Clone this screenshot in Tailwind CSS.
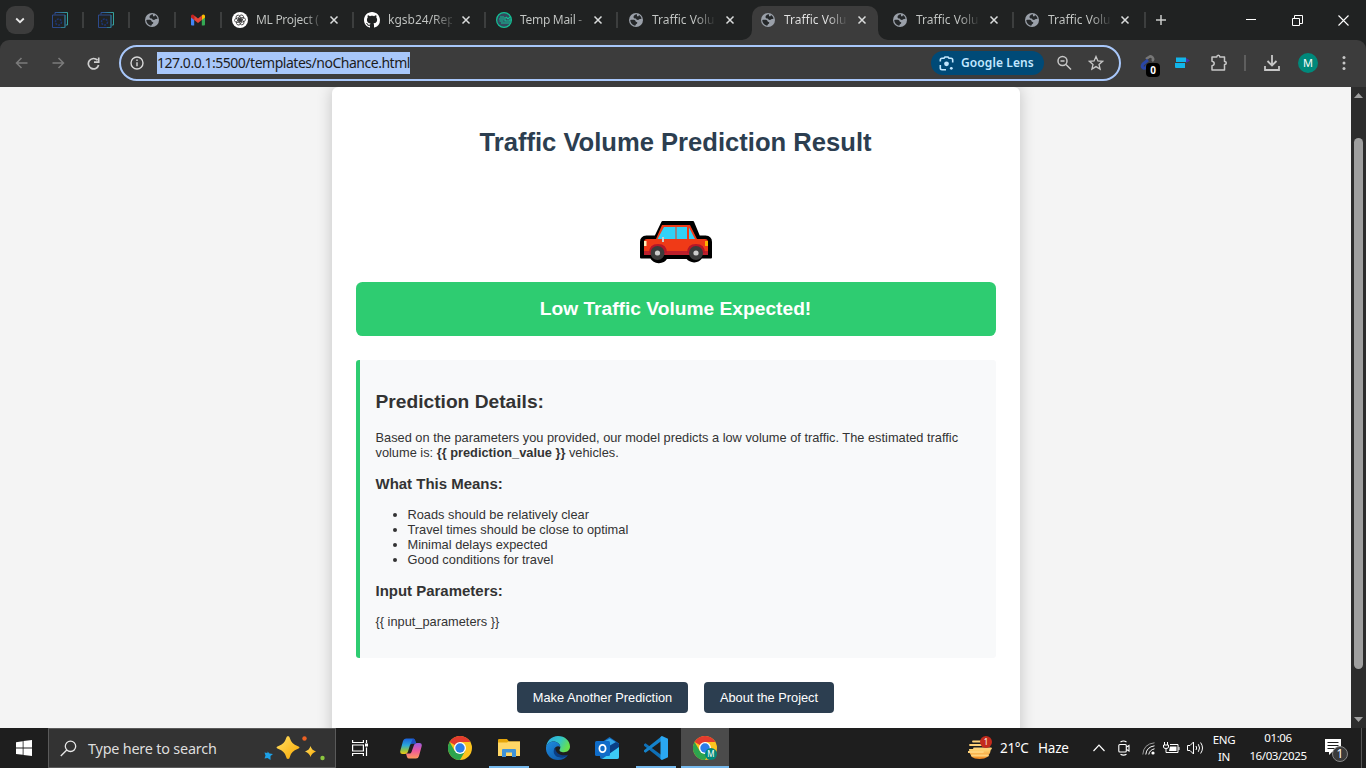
<!DOCTYPE html>
<html lang="en">
<head>
<meta charset="utf-8">
<title>Traffic Volume Prediction Result</title>
<script src="https://cdn.jsdelivr.net/npm/@tailwindcss/browser@4"></script>
</head>
<body class="w-[1366px] h-[768px] overflow-hidden bg-[#202222] font-['Noto_Sans',sans-serif]">
<svg width="0" height="0" class="absolute">
  <defs>
    <linearGradient id="edge" x1="0" y1="0" x2="1" y2="0"><stop offset="0" stop-color="#2c4a97"/><stop offset="1" stop-color="#35a39c"/></linearGradient>
    <linearGradient id="gold" x1="0" y1="0" x2="1" y2="1"><stop offset="0" stop-color="#ffe066"/><stop offset="1" stop-color="#f9a800"/></linearGradient>
    <linearGradient id="cpA" x1="0" y1="0" x2="0" y2="1"><stop offset="0" stop-color="#1b62dd"/><stop offset=".45" stop-color="#2ba8d8"/><stop offset=".75" stop-color="#8bc34a"/><stop offset="1" stop-color="#f2c811"/></linearGradient>
    <linearGradient id="cpB" x1="0" y1="0" x2="0" y2="1"><stop offset="0" stop-color="#9a5be0"/><stop offset=".5" stop-color="#ee5a9a"/><stop offset="1" stop-color="#ff9a5a"/></linearGradient>
    <linearGradient id="edTop" x1="0" y1="0" x2="1" y2=".4"><stop offset="0" stop-color="#2aa5e8"/><stop offset=".6" stop-color="#33c6c6"/><stop offset="1" stop-color="#66e04f"/></linearGradient>
    <linearGradient id="edBot" x1="0" y1="0" x2="1" y2="1"><stop offset="0" stop-color="#1e8de0"/><stop offset="1" stop-color="#0d4f9e"/></linearGradient>
    <linearGradient id="haze" x1="0" y1="0" x2="0" y2="1"><stop offset="0" stop-color="#ffd978"/><stop offset="1" stop-color="#f0861c"/></linearGradient>
    <symbol id="globe" viewBox="0 0 14 14"><circle cx="7" cy="7" r="7" fill="#9aa0a9"/><path d="M8 1.300C5.800 1.500 4.500 2.800 4.500 4.100c0 1.200 1 1.500 2.300 1.500.3 1 1.300 1.500 2.400 1.300 1-.2 1.300-.8 2.300-.8.5 0 .8-.2 1.100-.5C12.300 4 11.300 2.800 10 2l-.5 1.300H8zM1.300 7c1.400-.3 3.700-.5 4.700.3.700.6.400 1.400 1.500 1.700 1 .3 1 1.100.300 1.700-.6.500-1.300.6-1.500 2C3.500 12.300 1.300 10 1.300 7z" fill="#25282a"/></symbol>
    <symbol id="layers" viewBox="0 0 18 18" fill="none"><path d="M4 3.500V1.500h12.500v12.500H14.500" stroke="url(#edge)"/><path d="M1.500 4h12.500v12.500h-12.500z" stroke="#2c4a8c"/><path d="M14 4v12.500h-4" stroke="#2e7d8c"/><circle cx="7.500" cy="11" r="3" stroke="#1c3570" stroke-width="1.500" stroke-dasharray="2 1"/></symbol>
    <symbol id="close" viewBox="0 0 10 10"><path d="M1.500 1.500l7 7m0-7l-7 7" stroke="#dadcdc" stroke-width="1.500" fill="none"/></symbol>
    <symbol id="chrome" viewBox="0 0 24 24"><circle cx="12" cy="12" r="12" fill="#fcc31e"/><path d="M12 12L1.600 6A12 12 0 0 1 22.400 6H12z" fill="#e33b2e"/><path d="M1.600 6A12 12 0 0 0 12 24l5.200-9L12 12 6.800 15z" fill="#2da44e"/><circle cx="12" cy="12" r="6" fill="#fff"/><circle cx="12" cy="12" r="4.700" fill="#2b7de9"/></symbol>
  </defs>
</svg>

<!-- Tab strip -->
<header class="flex h-10 w-full items-center text-[12px] text-[#c4c7c5]">
  <div class="ml-1.5 flex h-7 w-7 shrink-0 items-center justify-center rounded-[9px] bg-[#3c3c3c]"><svg width="10" height="7" viewBox="0 0 10 7"><path d="M1.200 1.500L5 5.200l3.800-3.700" fill="none" stroke="#e8e8e8" stroke-width="1.800"/></svg></div>
  <div class="w-[3px] shrink-0"></div>
  <div class="flex w-[46px] shrink-0 items-center"><svg class="ml-3.5" width="18" height="18"><use href="#layers"/></svg><i class="-mr-px ml-auto h-4 w-0.5 bg-[#3c3e3e]"></i></div>
  <div class="flex w-[46px] shrink-0 items-center"><svg class="ml-3.5" width="18" height="18"><use href="#layers"/></svg><i class="-mr-px ml-auto h-4 w-0.5 bg-[#3c3e3e]"></i></div>
  <div class="flex w-[46px] shrink-0 items-center"><svg class="ml-4" width="14" height="14"><use href="#globe"/></svg><i class="-mr-px ml-auto h-4 w-0.5 bg-[#3c3e3e]"></i></div>
  <div class="flex w-[46px] shrink-0 items-center"><svg class="ml-4" width="14" height="12" viewBox="0 0 14 12"><path d="M0 2v8.500q0 1 1 1h2.200V5z" fill="#4285f4"/><path d="M14 2v8.500q0 1-1 1h-2.200V5z" fill="#34a853"/><path d="M10.800 1.500V6L14 3.500V2q0-1.500-1.500-1.500-1 0-1.700 1z" fill="#fbbc04"/><path d="M3.200 1.500V6L0 3.500V2Q0 .5 1.500.5q1 0 1.700 1z" fill="#c5221f"/><path d="M3.200 1.500L7 4.500l3.800-3V6L7 9 3.200 6z" fill="#ea4335"/></svg><i class="-mr-px ml-auto h-4 w-0.5 bg-[#3c3e3e]"></i></div>

  <div class="flex w-[132px] shrink-0 items-center">
    <svg class="ml-[11px] shrink-0" width="16" height="16" viewBox="0 0 16 16"><circle cx="8" cy="8" r="8" fill="#fff"/><g fill="none" stroke="#333" stroke-width=".8"><ellipse cx="8" cy="5.700" rx="2.200" ry="3.200" transform="rotate(25 8 8)"/><ellipse cx="8" cy="5.700" rx="2.200" ry="3.200" transform="rotate(85 8 8)"/><ellipse cx="8" cy="5.700" rx="2.200" ry="3.200" transform="rotate(145 8 8)"/><ellipse cx="8" cy="5.700" rx="2.200" ry="3.200" transform="rotate(205 8 8)"/><ellipse cx="8" cy="5.700" rx="2.200" ry="3.200" transform="rotate(265 8 8)"/><ellipse cx="8" cy="5.700" rx="2.200" ry="3.200" transform="rotate(325 8 8)"/></g></svg>
    <span class="ml-2 w-[64px] whitespace-nowrap bg-linear-to-r from-[#c4c7c5] from-75% to-[#c4c7c5]/20 bg-clip-text tracking-[-0.3px] text-transparent">ML Project (</span>
    <svg class="ml-[9px]" width="10" height="10"><use href="#close"/></svg><i class="-mr-px ml-auto h-4 w-0.5 bg-[#3c3e3e]"></i>
  </div>
  <div class="flex w-[132px] shrink-0 items-center">
    <svg class="ml-[11px] shrink-0" width="16" height="16" viewBox="0 0 16 16"><path fill="#fff" d="M8 0C3.580 0 0 3.580 0 8c0 3.540 2.290 6.530 5.470 7.590.4.070.55-.17.55-.38 0-.19-.01-.82-.01-1.490-2.010.37-2.530-.49-2.690-.94-.09-.23-.48-.94-.82-1.130-.28-.15-.68-.52-.01-.53.63-.01 1.080.58 1.230.82.72 1.210 1.870.87 2.330.66.070-.52.280-.87.510-1.070-1.780-.2-3.640-.89-3.640-3.950 0-.87.310-1.590.820-2.150-.08-.2-.36-1.020.080-2.120 0 0 .67-.21 2.200.820.64-.18 1.320-.27 2-.27s1.360.090 2 .27c1.530-1.040 2.200-.82 2.200-.82.44 1.100.16 1.920.080 2.120.51.56.82 1.270.82 2.150 0 3.070-1.870 3.750-3.650 3.950.29.25.54.73.54 1.480 0 1.070-.01 1.930-.01 2.200 0 .21.15.46.55.38A8 8 0 0 0 16 8c0-4.420-3.580-8-8-8z"/></svg>
    <span class="ml-2 w-[64px] whitespace-nowrap bg-linear-to-r from-[#c4c7c5] from-70% to-[#c4c7c5]/20 bg-clip-text text-transparent">kgsb24/Rep</span>
    <svg class="ml-[9px]" width="10" height="10"><use href="#close"/></svg><i class="-mr-px ml-auto h-4 w-0.5 bg-[#3c3e3e]"></i>
  </div>
  <div class="flex w-[132px] shrink-0 items-center">
    <svg class="ml-[11px] shrink-0" width="16" height="16" viewBox="0 0 16 16" fill="none"><circle cx="8" cy="8" r="7.400" fill="#34495e" stroke="#13c296" stroke-width="1.200"/><path d="M4 5h4M3 7h5M3.500 9h4M5 11h9M9 5v4h5V7M10 5l2 2 2-2" stroke="#13c296" stroke-width="1.100"/></svg>
    <span class="ml-2 w-[64px] whitespace-nowrap bg-linear-to-r from-[#c4c7c5] from-85% to-[#c4c7c5]/30 bg-clip-text tracking-[-0.3px] text-transparent">Temp Mail -</span>
    <svg class="ml-[9px]" width="10" height="10"><use href="#close"/></svg><i class="-mr-px ml-auto h-4 w-0.5 bg-[#3c3e3e]"></i>
  </div>
  <div class="flex w-[132px] shrink-0 items-center">
    <svg class="ml-3 shrink-0" width="14" height="14"><use href="#globe"/></svg>
    <span class="ml-[9px] w-[62px] whitespace-nowrap bg-linear-to-r from-[#c4c7c5] from-70% to-[#c4c7c5]/10 bg-clip-text text-transparent">Traffic Volu</span>
    <svg class="ml-[11px]" width="10" height="10"><use href="#close"/></svg>
  </div>
  <div class="relative ml-[3px] mr-[3px] mt-1.5 flex h-[34px] w-[126px] shrink-0 items-center rounded-t-[10px] bg-[#3c3c3c] pb-1.5">
    <svg class="absolute -left-2.5 bottom-0" width="10" height="10"><path d="M10 0v10H0A10 10 0 0 0 10 0z" fill="#3c3c3c"/></svg>
    <svg class="absolute -right-2.5 bottom-0" width="10" height="10"><path d="M0 0v10h10A10 10 0 0 1 0 0z" fill="#3c3c3c"/></svg>
    <svg class="ml-[9px] shrink-0" width="14" height="14"><use href="#globe"/></svg>
    <span class="ml-[9px] w-[62px] whitespace-nowrap bg-linear-to-r from-[#e3e3e3] from-70% to-[#e3e3e3]/10 bg-clip-text text-transparent">Traffic Volu</span>
    <svg class="ml-[11px]" width="10" height="10"><use href="#close"/></svg>
  </div>
  <div class="flex w-[132px] shrink-0 items-center">
    <svg class="ml-3 shrink-0" width="14" height="14"><use href="#globe"/></svg>
    <span class="ml-[9px] w-[62px] whitespace-nowrap bg-linear-to-r from-[#c4c7c5] from-70% to-[#c4c7c5]/10 bg-clip-text text-transparent">Traffic Volu</span>
    <svg class="ml-[11px]" width="10" height="10"><use href="#close"/></svg><i class="-mr-px ml-auto h-4 w-0.5 bg-[#3c3e3e]"></i>
  </div>
  <div class="flex w-[132px] shrink-0 items-center">
    <svg class="ml-3 shrink-0" width="14" height="14"><use href="#globe"/></svg>
    <span class="ml-[9px] w-[62px] whitespace-nowrap bg-linear-to-r from-[#c4c7c5] from-70% to-[#c4c7c5]/10 bg-clip-text text-transparent">Traffic Volu</span>
    <svg class="ml-[10px]" width="10" height="10"><use href="#close"/></svg><i class="-mr-px ml-auto h-4 w-0.5 bg-[#3c3e3e]"></i>
  </div>
  <svg class="ml-2.5 shrink-0" width="12" height="12"><path d="M6 1v10M1 6h10" stroke="#c9cbca" stroke-width="1.500"/></svg>
  <svg class="ml-auto shrink-0" width="10" height="10"><path d="M0 4.500h10" stroke="#fff"/></svg>
  <svg class="ml-9 shrink-0" width="11" height="11" fill="none" stroke="#fff"><path d="M.5 3.500h7v7h-7zM2.500 3V.5h8v8H8"/></svg>
  <svg class="ml-[35px] mr-[17px] shrink-0" width="11" height="11" stroke="#fff" stroke-width="1.100"><path d="M.5.500l10 10m0-10l-10 10"/></svg>
</header>

<!-- Toolbar -->
<nav class="flex h-[47px] w-full items-center rounded-t-[9px] bg-[#3c3c3c] pb-px">
  <svg class="ml-[15px] shrink-0" width="13" height="12" fill="none" stroke="#7b7b7b" stroke-width="1.500"><path d="M12.500 6H1.500M6.500 1l-5 5 5 5"/></svg>
  <svg class="ml-6 shrink-0" width="13" height="12" fill="none" stroke="#7b7b7b" stroke-width="1.500"><path d="M.5 6h11M6.500 1l5 5-5 5"/></svg>
  <svg class="ml-[22px] shrink-0" width="13" height="13" fill="none" stroke="#d0d0d0" stroke-width="1.700"><path d="M10.500 3.300A5.200 5.200 0 1 0 11.600 8M11.700.5v4.700H7"/></svg>
  <div class="ml-[19px] flex h-9 w-[1002px] shrink-0 items-center rounded-full border-2 border-[#a8c7fa]">
    <svg class="ml-[9px] shrink-0" width="14" height="14" fill="none" stroke="#d8d8d8" stroke-width="1.400"><circle cx="7" cy="7" r="6"/><path d="M7 6.200v4M7 3.500v1.500"/></svg>
    <span class="ml-[13px] h-[22px] w-[253px] whitespace-nowrap bg-[#a8c7fa] text-[14px] leading-[22px] tracking-[-0.48px] text-[#1c1c1c]">127.0.0.1:5500/templates/noChance.html</span>
    <div class="ml-auto flex h-6 w-[113px] items-center rounded-full bg-[#004a77] text-[12px] font-semibold text-[#c2e7ff]">
      <svg class="ml-2 shrink-0" width="15" height="15" fill="none" stroke="#c2e7ff" stroke-width="1.600"><path d="M1.300 5.500V4q0-1.700 1.700-1.700h2L6 1h3l1 1.300h2q1.700 0 1.700 1.700v2.500M1.300 9v3q0 1.700 1.700 1.700h4"/><circle cx="7.500" cy="7.800" r="2.400" fill="#c2e7ff" stroke="none"/><circle cx="12.300" cy="12.300" r="1.400" fill="#c2e7ff" stroke="none"/></svg>
      <span class="ml-[7px] whitespace-nowrap tracking-[0.1px]">Google Lens</span>
    </div>
    <svg class="ml-3 shrink-0" width="16" height="16" fill="none" stroke="#c7c7c7" stroke-width="1.500"><circle cx="6.500" cy="6" r="4.500"/><path d="M10 9.500l5 5M4.500 6h4"/></svg>
    <svg class="ml-4 mr-[15px] shrink-0" width="16" height="16" viewBox="0 0 16 16" fill="none" stroke="#c7c7c7" stroke-width="1.300"><path d="M8 1.500l1.900 4.400 4.700.4-3.600 3.100 1.100 4.700L8 11.600l-4.100 2.500L5 9.400 1.400 6.300l4.700-.4z"/></svg>
  </div>
  <div class="relative ml-[17px] h-5 w-[22px] shrink-0">
    <svg width="22" height="20" fill="none"><path d="M8 6l3-2q2-1.500 3.500.5T14 8" stroke="#777" stroke-width="2.600"/><path d="M10 7l-5 4q-2 3 .5 4T9 12" stroke="#2946a8" stroke-width="3"/></svg>
    <span class="absolute left-[8px] top-[10px] flex h-[14px] w-[14px] items-center justify-center rounded-[4px] bg-black text-[10px] font-bold text-white">0</span>
  </div>
  <svg class="ml-[15px] shrink-0" width="16" height="12"><path d="M1 .5h10V5H1zM0 6h10v5H1q-1 0-1-1z" fill="#12b5ea"/><path d="M11 1l4 2.500L11 6z" fill="#4433a8"/></svg>
  <svg class="ml-[19px] shrink-0" width="18" height="18" viewBox="0 0 18 18" fill="none" stroke="#c7c7c7" stroke-width="1.500"><path d="M2 3h4.800q0-1.800 1.500-1.800T9.800 3h4.700v4.500q1.800 0 1.800 1.500t-1.800 1.500V16H2v-4.300q2.200-.4 2.200-2.200T2 7.300z" stroke-linejoin="round"/></svg>
  <i class="ml-4 h-4 w-0.5 bg-[#5e5e5e]"></i>
  <svg class="ml-[17px] shrink-0" width="18" height="18" fill="none" stroke="#c7c7c7" stroke-width="1.800"><path d="M9 1v10M4.500 7L9 11.500 13.500 7M2 12v4h14v-4"/></svg>
  <div class="ml-[17px] flex h-5 w-5 shrink-0 items-center justify-center rounded-full bg-[#00897b] text-[11px] text-white">M</div>
  <svg class="ml-6 shrink-0" width="4" height="16" fill="#c7c7c7"><circle cx="2" cy="2.500" r="1.500"/><circle cx="2" cy="8" r="1.500"/><circle cx="2" cy="13.500" r="1.500"/></svg>
</nav>

<!-- Page viewport -->
<div class="flex h-[641px] w-full overflow-hidden bg-[#f4f4f4] font-['Liberation_Sans',Arial,sans-serif] text-[12.8px] leading-[15px] text-[#333]">
  <main class="flex w-[1351px] justify-center overflow-hidden">
    <div class="h-[680px] w-[688px] rounded-[6.4px] bg-white px-6 shadow-[0_0_16px_rgba(0,0,0,0.2)]">
      <h1 class="pt-[40px] text-center text-[25.6px] font-bold leading-[30px] text-[#2c3e50]">Traffic Volume Prediction Result</h1>
      <div class="mt-[63px] flex h-[48px] justify-center">
        <svg width="74" height="46" viewBox="0 0 74 46">
          <path d="M23.500 2H54L60 16.500h6.500Q72 17 72 22v15.500H62.500A9 9 0 0 1 48 38H27.500A9 9 0 0 1 12 37.500H2V22q0-5 5.500-5.500h9z" fill="#000" stroke="#000" stroke-width="2" stroke-linejoin="round"/>
          <path d="M23 5h28l7 14h8q3 0 3 3v12H5V22q0-3 3-3h9z" fill="#f03a17"/>
          <path d="M25 7h11.500v12H18.500zM37.500 7H48v12H37.500zM50 7.500l6 11.500h-6z" fill="#31d2f7"/>
          <path d="M5 31h64v4H5z" fill="#bd1f2b"/>
          <path d="M10 33q0-9 9-9t9 9zM48 33q0-9 9-9t9 9z" fill="#b51728"/>
          <path d="M5 21h2.500v5H5z" fill="#fff1b5"/><path d="M66 21h3v5h-3z" fill="#ffb300"/><path d="M23 17h2v5h-2z" fill="#ccc"/>
          <circle cx="18.500" cy="33" r="7" fill="#3b3b3b"/><circle cx="57" cy="33" r="7" fill="#3b3b3b"/>
          <circle cx="18.500" cy="33" r="2.600" fill="#ccc"/><circle cx="57" cy="33" r="2.600" fill="#ccc"/>
        </svg>
      </div>
      <div class="mt-[14px] h-[54px] rounded-[6.4px] bg-[#2ecc71] text-center text-[19.2px] font-bold leading-[53px] text-white">Low Traffic Volume Expected!</div>
      <section class="mt-6 h-[298px] rounded-[3.2px] border-l-4 border-[#2ecc71] bg-[#f8f9fa] px-4 pt-[31px]">
        <h2 class="text-[19.2px] font-bold leading-[22px]">Prediction Details:</h2>
        <p class="mt-[17px]">Based on the parameters you provided, our model predicts a low volume of traffic. The estimated traffic<br>volume is: <b>{{ prediction_value }}</b> vehicles.</p>
        <h3 class="mt-[15px] text-[14.97px] font-bold leading-[17px]">What This Means:</h3>
        <ul class="mt-[15px] list-disc pl-8"><li>Roads should be relatively clear</li><li>Travel times should be close to optimal</li><li>Minimal delays expected</li><li>Good conditions for travel</li></ul>
        <h3 class="mt-[15px] text-[14.97px] font-bold leading-[17px]">Input Parameters:</h3>
        <p class="mt-[15px]">{{ input_parameters }}</p>
      </section>
      <div class="mt-6 flex justify-center gap-4 text-white">
        <a class="flex h-[31px] w-[171px] items-center justify-center rounded-[4px] bg-[#2c3e50]">Make Another Prediction</a>
        <a class="flex h-[31px] w-[130px] items-center justify-center rounded-[4px] bg-[#2c3e50]">About the Project</a>
      </div>
    </div>
  </main>
  <aside class="flex w-[15px] flex-col items-center bg-[#2c2c2c]">
    <svg class="mt-1.5 shrink-0" width="9" height="5"><path d="M0 5h9L4.500 0z" fill="#9f9f9f"/></svg>
    <div class="mt-10 h-[531px] w-[9px] shrink-0 rounded-full bg-[#9f9f9f]"></div>
    <svg class="mb-1.5 mt-auto shrink-0" width="9" height="5"><path d="M0 0h9L4.500 5z" fill="#9f9f9f"/></svg>
  </aside>
</div>

<!-- Taskbar -->
<footer class="flex h-10 w-full items-center bg-[#1e1e1e] text-white">
  <svg class="ml-4 shrink-0" width="16" height="16" fill="#fff"><path d="M0 2.200l6.700-1V7.600H0zM7.500 1L16 0v7.600H7.500zM0 8.400h6.700v6.400L0 13.900zM7.500 8.400H16V16l-8.500-1z"/></svg>
  <div class="ml-4 flex h-10 w-[288px] shrink-0 items-center border border-[#5a5a5a] bg-[#333]">
    <svg class="ml-[11px] shrink-0" width="17" height="17" fill="none" stroke="#e8e8e8" stroke-width="1.300"><circle cx="10.500" cy="6.300" r="5.200"/><path d="M6.800 10L.8 16"/></svg>
    <span class="ml-[11px] whitespace-nowrap pt-px text-[14.400px] tracking-[-0.2px] text-[#dedede]">Type here to search</span>
    <svg class="ml-auto mr-[9px] shrink-0" width="62" height="26" viewBox="0 0 62 26"><path d="M24 1q1.500 0 2 2.500 1.500 5.500 7.500 7.500 2 .700 2 1.500t-2 1.500q-6 2-7.500 7.500-.5 2.500-2 2.500t-2-2.500q-1.500-5.500-7.500-7.500-2-.7-2-1.500t2-1.500q6-2 7.500-7.500Q22.500 1 24 1z" fill="url(#gold)"/><path d="M46.500 11q1 4 5.500 5.500-4.500 1.500-5.500 5.500-1-4-5.500-5.500 4.500-1.500 5.500-5.500z" fill="url(#gold)"/><path d="M3.500 16.500l2 2 3.500.5-2.500 2 0 4-3-2-3 .5 1-3L.5 17.500l3 .5z" fill="#1da1e8"/><circle cx="40.500" cy="3.500" r="2.200" fill="#ee6123"/><circle cx="58.500" cy="23" r="2.200" fill="#8cc63f"/></svg>
  </div>
  <svg class="ml-4 shrink-0" width="17" height="16" fill="none" stroke="#fff" stroke-width="1.200"><path d="M.6 0v2.500h10.800V0M.6 5h10.800v6H.6zM.6 16v-2.500h10.800V16M14.500 0v3M14.500 7.500V16"/><path d="M13 3.500h3v3h-3z" fill="#fff" stroke="none"/></svg>
  <svg class="ml-[31px] shrink-0" width="22" height="21" viewBox="0 0 22 21"><path d="M6 .5h7q1.500 0 2 1.500l1 3.500h-4q-1.500 0-2 1.500L8 13.500Q7.400 16 5 16H2.500Q-.5 16 .4 12.500L3 3Q3.700.5 6 .5z" fill="url(#cpA)"/><path d="M16 20.500H9q-1.500 0-2-1.500l-1-3.500h3.500q1.500 0 2-1.500L14 7q.6-2 3-2h2.500q3 0 2.100 3.500L19 18q-.7 2.500-3 2.500z" fill="url(#cpB)"/><path d="M13 .5q1.500 0 2 1.500l1 3.500h-4q-1.500 0-2 1.500z" fill="#1e4fc2"/></svg>
  <svg class="ml-[26px] shrink-0" width="24" height="24"><use href="#chrome"/></svg>
  <div class="ml-[17px] flex h-10 w-10 shrink-0 items-center justify-center border-b-2 border-[#76b9ed]"><svg class="mt-0.5" width="22" height="18"><path d="M0 1q0-1 1-1h8l2 2.500H22V17H0z" fill="#e5a50a"/><path d="M0 3.500h9l1.500-1H22V17H0z" fill="#ffd766"/><path d="M4 18v-7q0-1 1-1h12q1 0 1 1v7h-4v-4.500H8V18z" fill="#3f93d8"/></svg></div>
  <svg class="ml-[17px] shrink-0" width="24" height="24" viewBox="0 0 24 24"><path d="M0 11.500C.5 5 5.500 0 12 0c7 0 12 5 12 10.500 0 4-3 5.700-6 5.700-3.500 0-4.500-1.200-4.500-2.200 0-.8.800-1 .8-2.700C14.300 8 11 5.500 7.500 5.500 4 5.500 1 8 0 11.500z" fill="url(#edTop)"/><path d="M0 11.500C.5 8 4 5.500 7.500 5.500c3.500 0 6.800 2.500 6.800 5.800-1-1.300-3-1.600-4.800 0-2.500 2.300-1.500 7 2 8.900 3.700 2 7.500 1 10.500-1.500C20 22 16.500 24 12 24 5 24-.5 18.500 0 11.500z" fill="url(#edBot)"/><path d="M9.500 11.300C6 14.500 8 20 12 21c4 1 7.500 0 10-2.300-3 1-8 .8-10.500-1.700-2-2-2.500-4-2-5.700z" fill="#0b3d82"/></svg>
  <svg class="ml-[25px] shrink-0" width="24" height="23" viewBox="0 0 24 23"><path d="M5 6.500L14.500 0 24 6.500V20q0 2-2 2H7q-2 0-2-2z" fill="#1069bd"/><path d="M8 5l7-3.500L22 6v5l-8 4-6-3z" fill="#35a7ea"/><path d="M14 9l7-4 3 2v4l-10 6z" fill="#0a3f86"/><path d="M7 22l17-12v10q0 2-2 2z" fill="#3ccaf5"/><rect y="4" width="15" height="15" rx="1.500" fill="#0f6cc9"/><ellipse cx="7.500" cy="11.500" rx="3.100" ry="3.600" fill="none" stroke="#fff" stroke-width="1.800"/></svg>
  <div class="ml-[17px] flex h-10 w-10 shrink-0 items-center justify-center border-b-2 border-[#76b9ed]"><svg class="mt-px" width="24" height="24" viewBox="0 0 24 24"><path d="M1.500 7.200L18 19.500V24L.3 10Q-.5 9 .3 8z" fill="#0f70b7"/><path d="M1.500 16.800L18 4.500V0L.3 14q-.8 1 0 2z" fill="#1583cb"/><path d="M18 0l6 2.800v18.400L18 24l-1.500-1V1z" fill="#2aa7f2"/></svg></div>
  <div class="ml-[5px] flex h-10 w-12 shrink-0 items-center justify-center border-b-2 border-[#76b9ed] bg-[#4b4b4b]"><div class="relative mt-0.5 h-6 w-6"><svg width="24" height="24"><use href="#chrome"/></svg><span class="absolute left-3 top-3 flex h-3 w-3 items-center justify-center rounded-full bg-[#00897b] text-[8px] text-white">M</span></div></div>

  <div class="relative ml-auto h-6 w-6 shrink-0">
    <svg width="24" height="24" viewBox="0 0 24 24"><path d="M1 13h22q-1 10-11.500 10T1 13z" fill="url(#haze)"/><path d="M5 5.500h9M2 9h13M6 12.500h17M0 16h15M4 19.500h16" stroke="#ffd27a" stroke-width="1.800" stroke-linecap="round"/></svg>
    <span class="absolute left-3 top-0 flex h-3 w-3 items-center justify-center rounded-full bg-[#c42b1c] text-[8px] text-white">1</span>
  </div>
  <span class="ml-2 w-[30px] whitespace-nowrap text-[13.500px] tracking-[-0.3px]">21°C</span>
  <span class="ml-2 w-[32px] whitespace-nowrap text-[13.500px] tracking-[-0.2px]">Haze</span>
  <svg class="ml-[23px] shrink-0" width="12" height="8" fill="none" stroke="#fff" stroke-width="1.200"><path d="M.5 7L6 1.200 11.500 7"/></svg>
  <svg class="ml-[13px] shrink-0" width="12" height="16" fill="none" stroke="#fff" stroke-width="1.100"><rect x=".8" y="4.500" width="7.500" height="7.500" rx="1"/><path d="M8.500 7l2.500-1.500v5.500L8.500 9.500M2.500 2Q5.500 0 8.500 2M2.500 14.200q3 1.800 6 0"/></svg>
  <svg class="ml-[12px] shrink-0" width="13" height="13" fill="none" stroke="#fff" stroke-width="1"><path d="M.8 12.500Q1.500 2 12.500.8" stroke="#999"/><path d="M3.800 12.500Q4.500 5 12.500 3.800M6.800 12.500Q7.500 8 12.500 6.800"/><circle cx="11" cy="11" r="1.600" fill="#fff" stroke="none"/></svg>
  <svg class="ml-2 shrink-0" width="17" height="13" fill="none" stroke="#fff" stroke-width="1"><path d="M1.500 0v3M4.500 0v3M.5 3h5v2q0 1.500-2.500 1.500T.5 5zM3 6.500v4h3M7 2.500h8v8H5.500"/><path d="M7 4.500h6.500V9H6z" fill="#fff" stroke="none"/><path d="M16 5v3"/></svg>
  <svg class="ml-[7px] shrink-0" width="17" height="14" fill="none" stroke="#fff" stroke-width="1"><path d="M.5 4.500h2.500L6.500 1v12L3 9.500H.5zM9 5q1.300 2 0 4M11.300 3.200q2.500 3.800 0 7.600M13.600 1.500q3.800 5.500 0 11"/></svg>
  <div class="ml-[6px] w-7 shrink-0 text-center text-[11.500px] leading-[17px] tracking-[-0.3px]">ENG<br>IN</div>
  <div class="ml-[7px] w-[66px] shrink-0 whitespace-nowrap pb-0.5 text-center text-[11.500px] leading-[18px] tracking-[-0.4px]">01:06<br>16/03/2025</div>
  <div class="relative ml-3 mt-1.5 h-6 w-[26px] shrink-0">
    <svg width="18" height="20"><path d="M2 0h16v13h-9l-3 3v-3H2z" fill="#fff"/><path d="M4.500 3.500h11M4.500 6.500h11M4.500 9.500h7" stroke="#1e1e1e"/></svg>
    <span class="absolute left-[9px] top-[7px] flex h-4 w-4 items-center justify-center rounded-full border border-[#888] bg-[#3a3a3a] text-[12px]">1</span>
  </div>
  <i class="ml-3 mr-1 h-10 w-px bg-[#555]"></i>
</footer>
</body>
</html>
